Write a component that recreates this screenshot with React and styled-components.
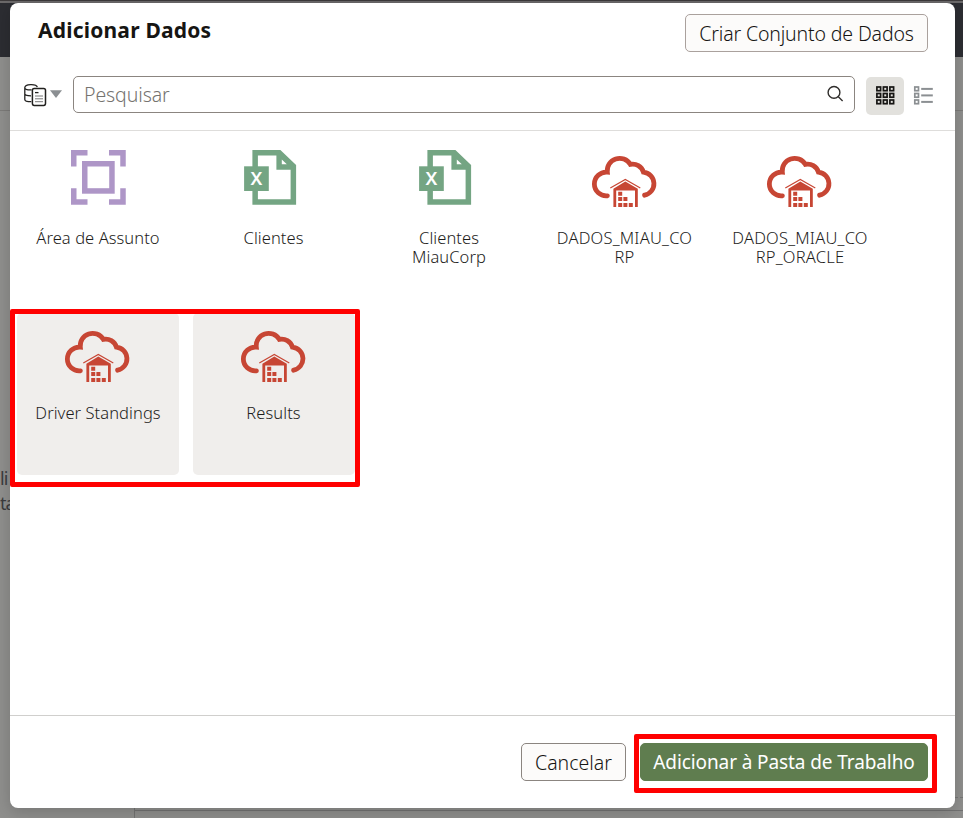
import React from 'react';
import styled, { createGlobalStyle } from 'styled-components';

const Global = createGlobalStyle`
  * { box-sizing: border-box; }
  html, body { margin: 0; overflow: hidden; }
  body { font-family: "Noto Sans", "Open Sans", sans-serif; color: #161513; }
  button { font-family: inherit; color: inherit; }
`;

const Page = styled.div`
  position: relative;
  width: 963px;
  height: 818px;
  overflow: hidden;
  display: flex;
  flex-direction: column;
  background: #8f8f8d;
`;
const TabStrip = styled.div`
  height: 3px;
  background: #6b696a;
  border-top: 1px solid #3d3a3b;
`;
const AppBar = styled.div`
  height: 54px;
  background: #2c2d32;
`;
const SubBar = styled.div`
  height: 54px;
  border-bottom: 1px solid #7c7b79;
`;
const Workspace = styled.div`
  flex: 1;
  display: flex;
  flex-direction: column;
  justify-content: space-between;
`;
const Hint = styled.div`
  width: 20px;
  margin-top: 355px;
  display: flex;
  flex-direction: column;
  align-items: flex-start;
  font-size: 18px;
  line-height: 25px;
  letter-spacing: -1px;
  color: #3b3c3e;
  white-space: nowrap;
`;
const CanvasEdge = styled.div`
  height: 21px;
  margin-left: 134px;
  border-left: 1px solid #737372;
  border-top: 1px dashed #777;
  display: flex;
  align-items: flex-end;
  &::after {
    content: "";
    flex: 1;
    height: 7px;
    border-top: 1px solid #727272;
  }
`;

const Dialog = styled.section`
  position: absolute;
  left: 10px;
  top: 3px;
  width: 945px;
  height: 805px;
  display: flex;
  flex-direction: column;
  background: #fff;
  border-radius: 8px;
  box-shadow: 0 4px 16px rgba(0, 0, 0, 0.18);
`;
const Header = styled.header`
  height: 61px;
  padding: 11px 27px 0 28px;
  display: flex;
  justify-content: space-between;
  align-items: flex-start;
`;
const Title = styled.h1`
  margin: 0;
  font-size: 21px;
  line-height: 32px;
  font-weight: 700;
  letter-spacing: 0.2px;
`;
const Button = styled.button`
  width: ${(p) => p.$width};
  height: 38px;
  padding: 0;
  display: flex;
  align-items: center;
  justify-content: center;
  white-space: nowrap;
  font-size: ${(p) => (p.$primary ? '19px' : '19.5px')};
  font-weight: ${(p) => (p.$primary ? 400 : 300)};
  letter-spacing: ${(p) => p.$track || '0'};
  color: ${(p) => (p.$primary ? '#fff' : '#161513')};
  background: ${(p) => (p.$primary ? '#5f7d4f' : '#fcfbfa')};
  border: 1px solid ${(p) => (p.$primary ? '#5f7d4f' : p.$soft ? '#aaa19d' : '#8b8580')};
  border-radius: 5px;
`;
const Toolbar = styled.div`
  height: 67px;
  padding: 12px 13px 0 13px;
  display: flex;
  align-items: flex-start;
  border-bottom: 1px solid #dedddb;
`;
const SourcePicker = styled.div`
  width: 50px;
  height: 40px;
  display: flex;
`;
const SearchBox = styled.label`
  width: 782px;
  height: 37px;
  padding: 0 10px 0 10px;
  display: flex;
  align-items: center;
  justify-content: space-between;
  border: 1px solid #8b8580;
  border-radius: 5px;
  font-size: 19.5px;
  font-weight: 300;
  color: #75736f;
  svg { margin-top: -2px; }
`;
const SearchText = styled.span`
  letter-spacing: -0.1px;
`;
const ViewToggle = styled.div`
  width: 38px;
  height: 38px;
  margin: 1px 0 0 ${(p) => p.$gap};
  display: flex;
  align-items: center;
  justify-content: center;
  border-radius: 5px;
  background: ${(p) => (p.$active ? '#e2e1dd' : 'transparent')};
`;
const Body = styled.main`
  height: 584px;
  padding: 7px 7px 0;
`;
const TileGrid = styled.div`
  display: grid;
  grid-template-columns: repeat(5, 162px);
  grid-auto-rows: 162px;
  gap: 13px 13.5px;
`;
const Tile = styled.div`
  padding-top: 4px;
  display: flex;
  flex-direction: column;
  align-items: center;
  border-radius: 5px;
  background: ${(p) => (p.$selected ? '#f0eeec' : 'transparent')};
`;
const TileLabel = styled.div`
  margin-top: 14px;
  width: ${(p) => p.$width || '150px'};
  text-align: center;
  font-size: 16.5px;
  line-height: 19px;
  font-weight: 300;
  letter-spacing: ${(p) => p.$track || '0.07px'};
  color: #1d1c1a;
  overflow-wrap: anywhere;
`;
const Footer = styled.footer`
  flex: 1;
  padding: 27px 27px 0;
  display: flex;
  justify-content: flex-end;
  gap: 14px;
  border-top: 1px solid #d0cfcd;
`;
const Marker = styled.div`
  position: absolute;
  left: ${(p) => p.$x}px;
  top: ${(p) => p.$y}px;
  width: ${(p) => p.$w}px;
  height: ${(p) => p.$h}px;
  border: 5px solid #f00;
  border-radius: 2px;
  pointer-events: none;
`;

const SubjectAreaIcon = () => (
  <svg width="72" height="72" viewBox="0 0 72 72" fill="none" stroke="#ae96c7" strokeWidth="5.5">
    <path d="M11.75 24.5V10.75H25.5M47 10.75H61V24.5M61 46.2V60H47M25.5 60H11.75V46.2" />
    <rect x="22.75" y="21.75" width="27.2" height="27.2" />
  </svg>
);

const SpreadsheetIcon = () => (
  <svg width="72" height="72" viewBox="0.4 0 72 72">
    <path
      fill="#74a583"
      fillRule="evenodd"
      d="M14.8 8H42.8L58.5 23V62.7H14.8ZM20.3 13.5V57.2H53V27.7H38.8V13.5ZM44.2 17.5V22.3H49.2Z"
    />
    <rect x="6.5" y="24.3" width="24.7" height="24.7" fill="#74a583" />
    <text x="18.8" y="43.3" textAnchor="middle" fontSize="18.5" fontWeight="600" fill="#fff">X</text>
  </svg>
);

const WarehouseCloudIcon = () => (
  <svg width="72" height="72" viewBox="0 0 72 72" fill="#c74634">
    <path
      fill="none"
      stroke="#c74634"
      strokeWidth="4.8"
      strokeLinecap="round"
      d="M18.4 53.8A11.9 11.9 0 1 1 18.3 30.1A12.4 12.4 0 0 1 41.3 22.4A11.2 11.2 0 0 1 54.4 30.1A11.7 11.7 0 0 1 55.6 53.2"
    />
    <path fill="none" stroke="#c74634" strokeWidth="1.2" d="M21.3 46L36.3 37.4L51.3 46" />
    <path d="M36.3 39.4L48.8 46.8V65H46V48.6H27.2V65H24.4V46.8Z" />
    <path d="M29.2 49.8h4v4h-4zM29.2 54.9h4v4h-4zM34.4 54.9h4v4h-4zM29.2 60.9h4v4h-4zM34.4 60.9h4v4h-4zM39.8 60.9h4v4h-4z" />
  </svg>
);

const SourceIcon = () => (
  <svg width="50" height="40" viewBox="0 0 50 40" fill="none" stroke="#22211f" strokeWidth="1.3">
    <path d="M1.8 11.8C1.8 7.6 13.5 7.6 14.3 11.2M1.8 11.2V23.4C1.8 25 4.5 25.7 8.3 25.7M1.8 11.8C1.8 13.7 5 14 8.6 13.8M1.8 17.8C1.8 19.4 4.5 19.8 8 19.8" />
    <rect x="9.4" y="12.4" width="13.1" height="17" rx="1.8" strokeWidth="1.5" fill="#fff" />
    <path d="M12 16.6h3.5" />
    <path d="M12 20h8M12 22.8h8M12 25.7h8" stroke="#777" strokeWidth="1" />
    <path d="M27 14.2H39L33 22Z" fill="#8b8f92" stroke="none" />
  </svg>
);

const SearchIcon = () => (
  <svg width="18" height="18" viewBox="0 0 18 18" fill="none" stroke="#302e2c" strokeWidth="1.4">
    <circle cx="8" cy="7.4" r="5.9" />
    <path d="M12.1 11.6L16.6 16.1" />
  </svg>
);

const cells = [0.9, 7.4, 13.9];
const GridIcon = () => (
  <svg width="20" height="20" viewBox="0 0.5 20 20" fill="none" stroke="#161513" strokeWidth="1.7">
    {cells.map((y) => cells.map((x) => (
      <rect key={`${x}-${y}`} x={x + 1} y={y + 0.6} width="3.7" height="3.7" />
    )))}
  </svg>
);
const ListIcon = () => (
  <svg width="20" height="20" viewBox="0 0.5 20 20" fill="none" stroke="#8b8f92" strokeWidth="1.7">
    {cells.map((y) => (
      <g key={y}>
        <rect x="1.8" y={y + 0.6} width="3.7" height="3.7" />
        <path d={`M8.2 ${y + 2.5}H19.8`} strokeWidth="2" />
      </g>
    ))}
  </svg>
);

const icons = { area: SubjectAreaIcon, sheet: SpreadsheetIcon, cloud: WarehouseCloudIcon };
const tiles = [
  { icon: 'area', label: 'Área de Assunto' },
  { icon: 'sheet', label: 'Clientes' },
  { icon: 'sheet', label: 'Clientes MiauCorp', width: '100px' },
  { icon: 'cloud', label: 'DADOS_MIAU_CORP', width: '140px', track: '0.2px' },
  { icon: 'cloud', label: 'DADOS_MIAU_CORP_ORACLE', width: '140px', track: '0.2px' },
  { icon: 'cloud', label: 'Driver Standings', selected: true },
  { icon: 'cloud', label: 'Results', selected: true },
];

export default function App() {
  return (
    <Page>
      <Global />
      <TabStrip />
      <AppBar />
      <SubBar />
      <Workspace>
        <Hint><span>li</span><span>ta</span></Hint>
        <CanvasEdge />
      </Workspace>
      <Dialog>
        <Header>
          <Title>Adicionar Dados</Title>
          <Button $width="243px" $soft $track="-0.15px">Criar Conjunto de Dados</Button>
        </Header>
        <Toolbar>
          <SourcePicker><SourceIcon /></SourcePicker>
          <SearchBox>
            <SearchText>Pesquisar</SearchText>
            <SearchIcon />
          </SearchBox>
          <ViewToggle $gap="11px" $active><GridIcon /></ViewToggle>
          <ViewToggle $gap="0"><ListIcon /></ViewToggle>
        </Toolbar>
        <Body>
          <TileGrid>
            {tiles.map((tile) => {
              const Icon = icons[tile.icon];
              return (
                <Tile key={tile.label} $selected={tile.selected}>
                  <Icon />
                  <TileLabel $width={tile.width} $track={tile.track}>{tile.label}</TileLabel>
                </Tile>
              );
            })}
          </TileGrid>
        </Body>
        <Footer>
          <Button $width="105px">Cancelar</Button>
          <Button $width="288px" $primary $track="-0.1px">Adicionar à Pasta de Trabalho</Button>
        </Footer>
      </Dialog>
      <Marker $x={10} $y={309} $w={350} $h={178} />
      <Marker $x={634} $y={734} $w={303} $h={59} />
    </Page>
  );
}
